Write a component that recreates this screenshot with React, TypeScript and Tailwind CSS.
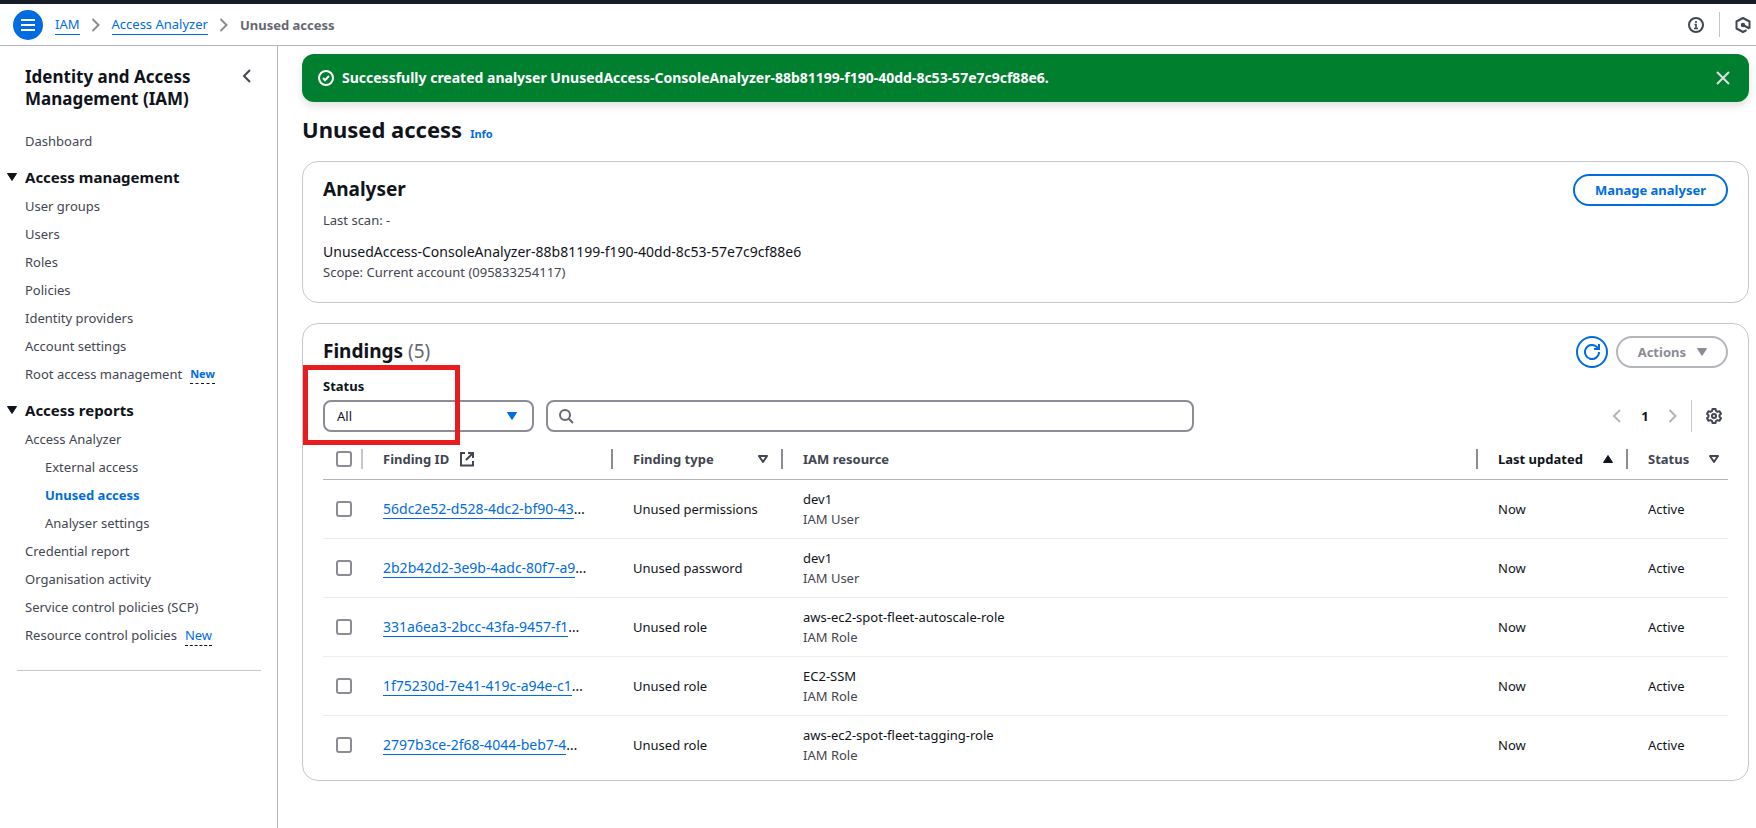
import React from "react";

type NavItem = { label: string; badge?: "bold" | "plain"; sub?: boolean; active?: boolean };

const managementItems: NavItem[] = [
  { label: "User groups" },
  { label: "Users" },
  { label: "Roles" },
  { label: "Policies" },
  { label: "Identity providers" },
  { label: "Account settings" },
  { label: "Root access management", badge: "bold" },
];

const reportItems: NavItem[] = [
  { label: "Access Analyzer" },
  { label: "External access", sub: true },
  { label: "Unused access", sub: true, active: true },
  { label: "Analyser settings", sub: true },
  { label: "Credential report" },
  { label: "Organisation activity" },
  { label: "Service control policies (SCP)" },
  { label: "Resource control policies", badge: "plain" },
];

const findings = [
  { id: "56dc2e52-d528-4dc2-bf90-43", type: "Unused permissions", resource: "dev1", kind: "IAM User" },
  { id: "2b2b42d2-3e9b-4adc-80f7-a9", type: "Unused password", resource: "dev1", kind: "IAM User" },
  { id: "331a6ea3-2bcc-43fa-9457-f1", type: "Unused role", resource: "aws-ec2-spot-fleet-autoscale-role", kind: "IAM Role" },
  { id: "1f75230d-7e41-419c-a94e-c1", type: "Unused role", resource: "EC2-SSM", kind: "IAM Role" },
  { id: "2797b3ce-2f68-4044-beb7-4", type: "Unused role", resource: "aws-ec2-spot-fleet-tagging-role", kind: "IAM Role" },
];

function Chevron({ dir, className }: { dir: "left" | "right"; className: string }) {
  return (
    <svg viewBox="0 0 16 16" className={`size-4 shrink-0 ${className}`} fill="none" stroke="currentColor" strokeWidth="2" aria-hidden="true">
      <path d={dir === "right" ? "M4.5 2l6 6-6 6" : "M11 2L5 8l6 6"} />
    </svg>
  );
}

function Triangle({ kind, className }: { kind: "down" | "up" | "outline"; className: string }) {
  return (
    <svg viewBox="0 0 16 16" className={`size-4 shrink-0 ${className}`} stroke="currentColor" aria-hidden="true">
      {kind === "down" && <path d="M3.500 4.500h9l-4.500 7z" fill="currentColor" strokeWidth="1" strokeLinejoin="round" />}
      {kind === "up" && <path d="M3.500 11.500h9l-4.500-7z" fill="currentColor" strokeWidth="1" strokeLinejoin="round" />}
      {kind === "outline" && <path d="M4 5h8l-4 6z" fill="none" strokeWidth="2" strokeLinejoin="round" />}
    </svg>
  );
}

function NavList({ items }: { items: NavItem[] }) {
  return (
    <ul className="flex flex-col gap-2">
      {items.map((item) => (
        <li key={item.label} className={`flex h-5 items-center gap-2 ${item.sub ? "pl-5" : ""}`}>
          <a href="#" className={item.active ? "font-bold text-[#006ce0]" : "text-[#424650]"}>
            {item.label}
          </a>
          {item.badge && (
            <a
              href="#"
              className={`border-b border-dashed border-[#0f141a] text-[#006ce0] ${item.badge === "bold" ? "text-[11px] leading-[18px] font-bold" : "leading-5"}`}
            >
              New
            </a>
          )}
        </li>
      ))}
    </ul>
  );
}

function SectionTitle({ children }: { children: React.ReactNode }) {
  return (
    <button type="button" className="flex items-center gap-[5px] pl-1 text-[15px] leading-5 font-bold">
      <Triangle kind="down" className="text-[#0f141a]" />
      {children}
    </button>
  );
}

function Sidebar() {
  return (
    <nav className="w-[278px] shrink-0 border-r border-[#b4b4bb] pt-5" aria-label="Service navigation">
      <div className="flex items-start justify-between pr-[22px] pl-[25px]">
        <h2 className="w-[200px] text-[17px] leading-[22px] font-bold">Identity and Access Management (IAM)</h2>
        <button type="button" aria-label="Close navigation" className="pt-[2px]">
          <Chevron dir="left" className="text-[#424650]" />
        </button>
      </div>
      <div className="mt-[21px] pl-[25px]">
        <a href="#" className="text-[#424650]">Dashboard</a>
      </div>
      <div className="mt-4">
        <SectionTitle>Access management</SectionTitle>
      </div>
      <div className="mt-[9px] pl-[25px]">
        <NavList items={managementItems} />
      </div>
      <div className="mt-4">
        <SectionTitle>Access reports</SectionTitle>
      </div>
      <div className="mt-[9px] pl-[25px]">
        <NavList items={reportItems} />
      </div>
      <hr className="mt-[25px] mr-4 ml-[17px] border-[#c6c6cd]" />
    </nav>
  );
}

function Checkbox({ label }: { label: string }) {
  return (
    <input
      type="checkbox"
      aria-label={label}
      className="block size-4 appearance-none rounded-[3px] border-2 border-[#8c8c94] bg-white checked:border-[#006ce0] checked:bg-[#006ce0]"
    />
  );
}

function HeadCell({ children, last }: { children: React.ReactNode; last?: boolean }) {
  return (
    <th scope="col" className="p-0 text-left font-bold">
      <div className={`flex h-5 items-center justify-between border-[#8c8c94] pl-5 ${last ? "pr-[6px]" : "border-r-2 pr-[10px]"}`}>
        {children}
      </div>
    </th>
  );
}

function Header() {
  return (
    <header className="flex h-[46px] shrink-0 items-center border-t-4 border-b border-t-[#161d26] border-b-[#b4b4bb] pr-[5px] pl-[13px]">
      <button type="button" aria-label="Open navigation" className="flex size-[30px] items-center justify-center rounded-full bg-[#006ce0]">
        <svg viewBox="0 0 16 16" className="size-4" stroke="#fff" strokeWidth="2" aria-hidden="true">
          <path d="M1 3h14M1 8h14M1 13h14" />
        </svg>
      </button>
      <nav aria-label="Breadcrumbs" className="ml-3 flex flex-1 items-center gap-2">
        <a href="#" className="border-b border-[#006ce0] text-[#006ce0]">IAM</a>
        <Chevron dir="right" className="text-[#8c8c94]" />
        <a href="#" className="border-b border-[#006ce0] text-[#006ce0]">Access Analyzer</a>
        <Chevron dir="right" className="text-[#8c8c94]" />
        <span className="font-bold text-[#656871]">Unused access</span>
      </nav>
      <button type="button" aria-label="Information">
        <svg viewBox="0 0 16 16" className="size-4" fill="none" stroke="#424650" strokeWidth="2" aria-hidden="true">
          <circle cx="8" cy="8" r="7" />
          <path d="M8 4v2M6.500 7.500H8v4M6 11.500h4" strokeWidth="1.600" />
        </svg>
      </button>
      <span className="mx-[15px] h-[25px] w-px bg-[#c6c6cd]" />
      <button type="button" aria-label="Assistant">
        <svg viewBox="0 0 16 16" className="size-4" fill="none" stroke="#424650" strokeWidth="2" strokeLinejoin="round" aria-hidden="true">
          <path d="M14.500 11.500V4.500L8 1 1.500 4.500v7L8 15l3.500-1.900" />
          <circle cx="8" cy="8" r="1.200" fill="#424650" />
          <path d="M8 8l6.500 3.500" />
        </svg>
      </button>
    </header>
  );
}

export default function App() {
  return (
    <div className="flex min-h-screen flex-col bg-white font-['Noto_Sans','Open_Sans',sans-serif] text-[13px] leading-5 text-[#0f141a]">
      <Header />
      <div className="flex flex-1">
        <Sidebar />
        <main className="min-w-0 flex-1 pt-2 pr-[7px] pb-10 pl-6">
          <div role="status" className="flex h-12 items-center gap-2 rounded-xl bg-[#00802f] pr-[18px] pl-4 font-bold text-white shadow-[0_4px_8px_rgba(0,7,22,0.12)]">
            <svg viewBox="0 0 16 16" className="size-4 shrink-0" fill="none" stroke="currentColor" strokeWidth="2" aria-hidden="true">
              <circle cx="8" cy="8" r="7" />
              <path d="M5 8l2 2.200L11 6" />
            </svg>
            <p className="flex-1 text-sm leading-5">Successfully created analyser UnusedAccess-ConsoleAnalyzer-88b81199-f190-40dd-8c53-57e7c9cf88e6.</p>
            <button type="button" aria-label="Dismiss">
              <svg viewBox="0 0 16 16" className="size-4" stroke="#dedee3" strokeWidth="2" aria-hidden="true">
                <path d="M2 2l12 12M14 2L2 14" />
              </svg>
            </button>
          </div>

          <div className="mt-[11px] flex items-baseline gap-2">
            <h1 className="text-[22px] leading-8 font-bold">Unused access</h1>
            <a href="#" className="text-[11px] font-bold text-[#006ce0]">Info</a>
          </div>

          <section className="mt-4 rounded-2xl border border-[#c6c6cd] px-5 pt-3 pb-5">
            <div className="flex items-start justify-between">
              <div>
                <h2 className="pt-[3px] text-[19px] leading-6 font-bold">Analyser</h2>
                <p className="mt-[9px] text-[#424650]">Last scan: -</p>
              </div>
              <button type="button" className="h-8 rounded-full border-2 border-[#006ce0] px-5 font-bold text-[#006ce0]">
                Manage analyser
              </button>
            </div>
            <p className="mt-3 text-sm leading-5">UnusedAccess-ConsoleAnalyzer-88b81199-f190-40dd-8c53-57e7c9cf88e6</p>
            <p className="text-[#424650]">Scope: Current account (095833254117)</p>
          </section>

          <section className="relative mt-5 rounded-2xl border border-[#c6c6cd] px-5 pt-3 pb-[6px]">
            <div className="flex items-start justify-between">
              <h2 className="pt-[3px] text-[19px] leading-6 font-bold">
                Findings <span className="font-normal text-[#656871]">(5)</span>
              </h2>
              <div className="flex gap-2">
                <button type="button" aria-label="Refresh" className="flex size-8 items-center justify-center rounded-full border-2 border-[#006ce0]">
                  <svg viewBox="0 0 16 16" className="size-4" fill="none" stroke="#006ce0" strokeWidth="2" aria-hidden="true">
                    <path d="M15 8a7 7 0 1 1-1.800-4.700L15 5" />
                    <path d="M10 5h5V0" />
                  </svg>
                </button>
                <button type="button" disabled className="flex h-8 items-center gap-2 rounded-full border-2 border-[#b4b4bb] pr-4 pl-5 font-bold text-[#8c8c94]">
                  Actions
                  <Triangle kind="down" className="text-[#8c8c94]" />
                </button>
              </div>
            </div>

            <div className="mt-2 flex items-end justify-between">
              <div className="flex flex-1 items-end gap-3">
                <div className="w-[211px]">
                  <label htmlFor="status" className="block font-bold">Status</label>
                  <div className="mt-1 grid items-center">
                    <select id="status" className="col-start-1 row-start-1 h-8 appearance-none rounded-lg border-2 border-[#8c8c94] bg-white px-3">
                      <option>All</option>
                    </select>
                    <Triangle kind="down" className="pointer-events-none col-start-1 row-start-1 mr-[14px] justify-self-end text-[#006ce0]" />
                  </div>
                </div>
                <div className="grid max-w-[648px] flex-1 items-center">
                  <input type="search" aria-label="Search findings" className="col-start-1 row-start-1 h-8 w-full appearance-none rounded-lg border-2 border-[#8c8c94] bg-white pr-3 pl-9" />
                  <svg viewBox="0 0 16 16" className="pointer-events-none col-start-1 row-start-1 ml-3 size-4" fill="none" stroke="#656871" strokeWidth="2" aria-hidden="true">
                    <circle cx="7" cy="7" r="5" />
                    <path d="M15 15l-4.500-4.500" />
                  </svg>
                </div>
              </div>
              <div className="flex h-8 items-center">
                <button type="button" aria-label="Previous page" disabled>
                  <Chevron dir="left" className="text-[#b4b4bb]" />
                </button>
                <button type="button" className="w-10 text-center font-bold">1</button>
                <button type="button" aria-label="Next page" disabled>
                  <Chevron dir="right" className="text-[#b4b4bb]" />
                </button>
                <span className="ml-[10px] h-8 w-px bg-[#c6c6cd]" />
                <button type="button" aria-label="Preferences" className="mr-[6px] ml-[14px]">
                  <svg viewBox="0 0 16 16" className="size-4" fill="none" stroke="#424650" strokeWidth="2" strokeLinejoin="round" aria-hidden="true">
                    <path d="M6.500 1h3l.5 2 1.500.9 2-.6 1.500 2.500L13.500 7.200v1.600l1.500 1.400-1.500 2.500-2-.6-1.500.9-.5 2h-3L6 13l-1.500-.9-2 .6L1 10.200l1.500-1.400V7.200L1 5.800l1.500-2.500 2 .6L6 3z" />
                    <circle cx="8" cy="8" r="2" />
                  </svg>
                </button>
              </div>
            </div>

            <table className="mt-[17px] w-full table-fixed border-collapse">
              <colgroup>
                <col className="w-10" />
                <col className="w-[250px]" />
                <col className="w-[170px]" />
                <col />
                <col className="w-[150px]" />
                <col className="w-[100px]" />
              </colgroup>
              <thead>
                <tr className="h-[30px] border-b border-[#b4b4bb] align-top text-[#424650]">
                  <th scope="col" className="p-0">
                    <div className="flex h-5 items-center border-r-2 border-[#c6c6cd] pl-[13px]">
                      <Checkbox label="Select all findings" />
                    </div>
                  </th>
                  <HeadCell>
                    <span className="flex items-center gap-[10px]">
                      Finding ID
                      <svg viewBox="0 0 16 16" className="size-4" fill="none" stroke="currentColor" strokeWidth="2" aria-hidden="true">
                        <path d="M6 2H2v12.500h12V10" />
                        <path d="M9 2h5v5M14 2L7 9" />
                      </svg>
                    </span>
                  </HeadCell>
                  <HeadCell>
                    Finding type
                    <Triangle kind="outline" className="" />
                  </HeadCell>
                  <HeadCell>IAM resource</HeadCell>
                  <HeadCell>
                    <span className="text-[#0f141a]">Last updated</span>
                    <Triangle kind="up" className="text-[#0f141a]" />
                  </HeadCell>
                  <HeadCell last>
                    Status
                    <Triangle kind="outline" className="" />
                  </HeadCell>
                </tr>
              </thead>
              <tbody>
                {findings.map((f) => (
                  <tr key={f.id} className="h-[59px] border-b border-[#ebebf0] last:border-b-0">
                    <td className="p-0 pl-[13px]">
                      <Checkbox label={`Select finding ${f.id}`} />
                    </td>
                    <td className="p-0 pl-5 text-sm leading-5 whitespace-nowrap">
                      <a href="#" className="border-b border-[#006ce0] text-[#006ce0]">{f.id}</a>…
                    </td>
                    <td className="p-0 pl-5 whitespace-nowrap">{f.type}</td>
                    <td className="p-0 pl-5">
                      <p>{f.resource}</p>
                      <p className="text-[#424650]">{f.kind}</p>
                    </td>
                    <td className="p-0 pl-5">Now</td>
                    <td className="p-0 pl-5">Active</td>
                  </tr>
                ))}
              </tbody>
            </table>

            <div className="pointer-events-none absolute top-[41px] left-0 h-20 w-[157px] border-5 border-[#e81c1e]" />
          </section>
        </main>
      </div>
    </div>
  );
}
